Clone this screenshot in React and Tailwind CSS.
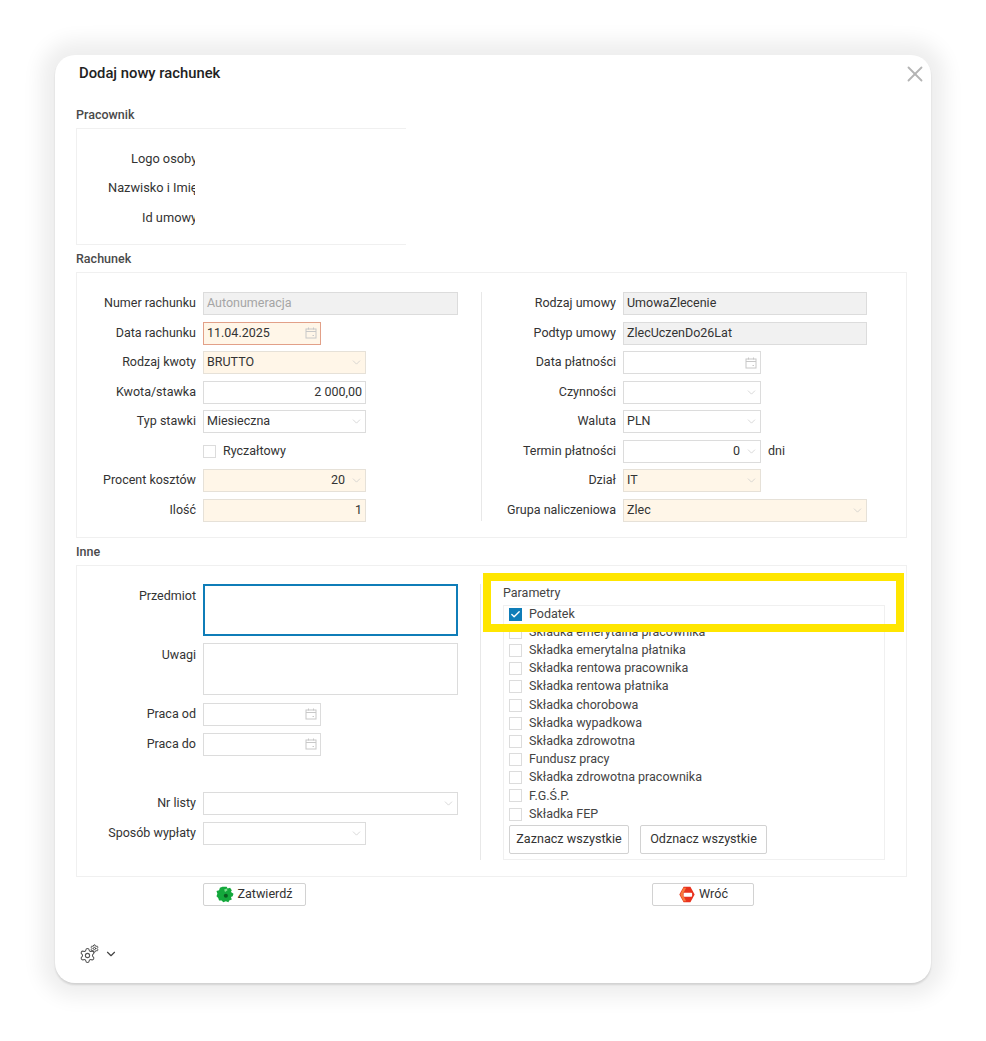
import React from "react";
import { Check, ChevronDown, Settings, X } from "lucide-react";

const fieldBase = "h-[23px] shrink-0 flex items-center px-[3px] border text-[12.5px] text-[#333]";
const sectionTitle = "h-[27px] pt-[1px] flex items-center text-[12.5px] font-medium text-[#4a4a4a]";

function Calendar() {
  return (
    <svg viewBox="0 0 12 12" className="w-[12px] h-[12px] text-[#c8c8c8]" fill="none" stroke="currentColor">
      <rect x="1" y="2" width="10" height="9" />
      <path d="M1 4.5h10M3.5 0.5v2M8.5 0.5v2M7.5 8.5h1.5" />
    </svg>
  );
}

function Arrow() {
  return <ChevronDown className="w-[13px] h-[13px] text-[#c4c4c4]" strokeWidth={1.2} />;
}

function Label({ width, children }) {
  return (
    <div style={{ width }} className="shrink-0 pr-[7px] text-right text-[12.5px] text-[#333] whitespace-nowrap">
      {children}
    </div>
  );
}

function Field({ label, labelWidth, width, value, tone = "white", right = false, icon, after }) {
  const tones = {
    white: "bg-white border-[#dcdcdc]",
    cream: "bg-[#fff6e8] border-[#e6e1d8]",
    error: "bg-[#fff6e8] border-[#e2a088]",
    gray: "bg-[#f1f1f1] border-[#dcdcdc]",
  };
  return (
    <div className="flex items-center h-[23px]">
      <Label width={labelWidth}>{label}</Label>
      <div style={{ width }} className={`${fieldBase} ${tones[tone]}`}>
        <span className={`flex-1 whitespace-nowrap ${right ? "text-right" : ""} ${value === "Autonumeracja" ? "text-[#a5a5a5]" : ""}`}>
          {value}
        </span>
        {icon === "calendar" && <span className="ml-[4px] flex"><Calendar /></span>}
        {icon === "arrow" && <span className="ml-[5px] -mr-[1px] flex"><Arrow /></span>}
      </div>
      {after && <span className="ml-[7px] text-[12.5px] text-[#333]">{after}</span>}
    </div>
  );
}

function Box({ checked }) {
  return checked ? (
    <span className="w-[13px] h-[13px] shrink-0 bg-[#0f7db8] flex items-center justify-center">
      <Check className="w-[11px] h-[11px] text-white" strokeWidth={3} />
    </span>
  ) : (
    <span className="w-[13px] h-[13px] shrink-0 bg-white border border-[#dcdcdc]" />
  );
}

function GreenGear() {
  return (
    <svg viewBox="0 0 20 20" className="w-[18px] h-[17px]">
      <path
        d="M7 1h5l1 2 3-1 2 3-1 2 3 2-1 3-2 1 1 3-3 1-1 2-3-1-3 1-2-2-3 0-1-3-2-2 1-3-1-3 3-1 1-3z"
        fill="#14a83c"
      />
      <circle cx="11" cy="11.5" r="2.4" fill="#0a5c20" />
      <path d="M9 4l3-1 1 2-3 2z" fill="#7fe08f" />
    </svg>
  );
}

function RedStop() {
  return (
    <svg viewBox="0 0 20 20" className="w-[18px] h-[17px]">
      <path d="M6 1h8l5 9-5 9H6l-5-9z" fill="#e8321e" />
      <path d="M2 10l4-8h3l-4 8 4 8H6z" fill="#f77a3c" />
      <rect x="6" y="8" width="10" height="4.5" rx="1" fill="#fff" />
    </svg>
  );
}

const params = [
  "Podatek",
  "Składka emerytalna pracownika",
  "Składka emerytalna płatnika",
  "Składka rentowa pracownika",
  "Składka rentowa płatnika",
  "Składka chorobowa",
  "Składka wypadkowa",
  "Składka zdrowotna",
  "Fundusz pracy",
  "Składka zdrowotna pracownika",
  "F.G.Ś.P.",
  "Składka FEP",
];

export default function App() {
  const L = 126;
  const R = 141;
  return (
    <div className="w-[986px] h-[1041px] bg-white pt-[55px] pl-[55px] overflow-hidden font-['Roboto',sans-serif]">
      <div className="relative w-[876px] h-[928px] bg-white rounded-[20px] pl-[21px] pr-[24px] shadow-[0_2px_2px_rgba(0,0,0,0.12),0_0_20px_14px_rgba(0,0,0,0.07)]">
        <X className="absolute top-[6px] right-[3px] w-[26px] h-[26px] text-[#b4b4b4]" strokeWidth={1.7} />

        <div className="h-[46px] pt-[8px] pl-[3px] text-[14.8px] leading-[20px] font-medium text-[#222]">Dodaj nowy rachunek</div>

        <div className={sectionTitle}>Pracownik</div>
        <div className="w-[330px] h-[117px] border-y border-l border-[#f0f0f0] flex flex-col pt-[18px] gap-[6.5px]">
          {[
            ["Logo osoby", "w-[64px]"],
            ["Nazwisko i Imię", "w-[87px]"],
            ["Id umowy", "w-[53px]"],
          ].map(([text, w]) => (
            <div key={text} className="h-[23px] w-[118px] flex justify-end items-center">
              <div className={`${w} overflow-hidden whitespace-nowrap text-[12.8px] text-[#333]`}>{text}</div>
            </div>
          ))}
        </div>

        <div className={sectionTitle}>Rachunek</div>
        <div className="h-[266px] border border-[#f0f0f0] flex pt-[19px]">
          <div className="w-[404px] flex flex-col gap-[6.5px]">
            <Field label="Numer rachunku" labelWidth={L} width={255} value="Autonumeracja" tone="gray" />
            <Field label="Data rachunku" labelWidth={L} width={118} value="11.04.2025" tone="error" icon="calendar" />
            <Field label="Rodzaj kwoty" labelWidth={L} width={163} value="BRUTTO" tone="cream" icon="arrow" />
            <Field label="Kwota/stawka" labelWidth={L} width={163} value="2 000,00" right />
            <Field label="Typ stawki" labelWidth={L} width={163} value="Miesieczna" icon="arrow" />
            <div className="h-[23px] flex items-center pl-[126px] gap-[7px] text-[12.5px] text-[#333]">
              <Box />
              Ryczałtowy
            </div>
            <Field label="Procent kosztów" labelWidth={L} width={163} value="20" tone="cream" right icon="arrow" />
            <Field label="Ilość" labelWidth={L} width={163} value="1" tone="cream" right />
          </div>
          <div className="h-[229px] border-l border-[#e8e8e8] flex flex-col gap-[6.5px]">
            <Field label="Rodzaj umowy" labelWidth={R} width={244} value="UmowaZlecenie" tone="gray" />
            <Field label="Podtyp umowy" labelWidth={R} width={244} value="ZlecUczenDo26Lat" tone="gray" />
            <Field label="Data płatności" labelWidth={R} width={138} value="" icon="calendar" />
            <Field label="Czynności" labelWidth={R} width={138} value="" icon="arrow" />
            <Field label="Waluta" labelWidth={R} width={138} value="PLN" icon="arrow" />
            <Field label="Termin płatności" labelWidth={R} width={138} value="0" right icon="arrow" after="dni" />
            <Field label="Dział" labelWidth={R} width={138} value="IT" tone="cream" icon="arrow" />
            <Field label="Grupa naliczeniowa" labelWidth={R} width={244} value="Zlec" tone="cream" icon="arrow" />
          </div>
        </div>

        <div className={sectionTitle}>Inne</div>
        <div className="h-[312px] border border-[#f0f0f0] flex pt-[18px]">
          <div className="w-[403px] flex flex-col">
            <div className="flex h-[52px]">
              <div className="pt-[3px]"><Label width={L}>Przedmiot</Label></div>
              <div className="w-[255px] h-[52px] border-2 border-[#0f7db8] bg-white" />
            </div>
            <div className="flex h-[52px] mt-[7px]">
              <div className="pt-[3px]"><Label width={L}>Uwagi</Label></div>
              <div className="w-[255px] h-[52px] border border-[#dcdcdc] bg-white" />
            </div>
            <div className="mt-[7.5px] flex flex-col gap-[7px]">
              <Field label="Praca od" labelWidth={L} width={118} value="" icon="calendar" />
              <Field label="Praca do" labelWidth={L} width={118} value="" icon="calendar" />
            </div>
            <div className="mt-[36px] flex flex-col gap-[7px]">
              <Field label="Nr listy" labelWidth={L} width={255} value="" icon="arrow" />
              <Field label="Sposób wypłaty" labelWidth={L} width={163} value="" icon="arrow" />
            </div>
          </div>
          <div className="h-[276px] border-l border-[#e8e8e8] pl-[22px]">
            <div className="h-[21px] text-[12.5px] leading-[17px] text-[#444]">Parametry</div>
            <div className="w-[382px] h-[255px] border border-[#f0f0f0] pl-[5px]">
              <div className="flex flex-col -mt-[1px]">
                {params.map((p, i) => (
                  <div key={p} className="h-[18.2px] flex items-center gap-[7px] text-[12.5px] text-[#444] whitespace-nowrap">
                    <Box checked={i === 0} />
                    {p}
                  </div>
                ))}
              </div>
              <div className="flex gap-[11px] mt-[2px]">
                <button className="w-[120px] h-[29px] bg-white border border-[#d2d2d2] rounded-[2px] text-[12.6px] text-[#333]">Zaznacz wszystkie</button>
                <button className="w-[127px] h-[29px] bg-white border border-[#d2d2d2] rounded-[2px] text-[12.6px] text-[#333]">Odznacz wszystkie</button>
              </div>
            </div>
          </div>
        </div>

        <div className="flex mt-[6px]">
          <button className="ml-[127px] w-[103px] h-[23px] bg-white border border-[#d2d2d2] rounded-[2px] flex items-center justify-center gap-[3px] text-[12.6px] text-[#333]">
            <GreenGear />
            Zatwierdź
          </button>
          <button className="ml-[346px] w-[102px] h-[23px] bg-white border border-[#d2d2d2] rounded-[2px] flex items-center justify-center gap-[3px] text-[12.6px] text-[#333]">
            <RedStop />
            Wróć
          </button>
        </div>

        <div className="flex items-center mt-[38px] ml-[3px]">
          <div className="relative w-[20px] h-[20px]">
            <Settings className="absolute left-0 bottom-0 w-[17px] h-[17px] text-[#555]" strokeWidth={1.5} />
            <Settings className="absolute right-0 top-0 w-[9px] h-[9px] text-[#444]" strokeWidth={2.6} />
          </div>
          <ChevronDown className="ml-[5px] w-[14px] h-[14px] text-[#444]" strokeWidth={2} />
        </div>

        <div className="absolute top-[518px] left-[428px] w-[421px] h-[59px] border-8 border-[#ffe600]" />
      </div>
    </div>
  );
}
